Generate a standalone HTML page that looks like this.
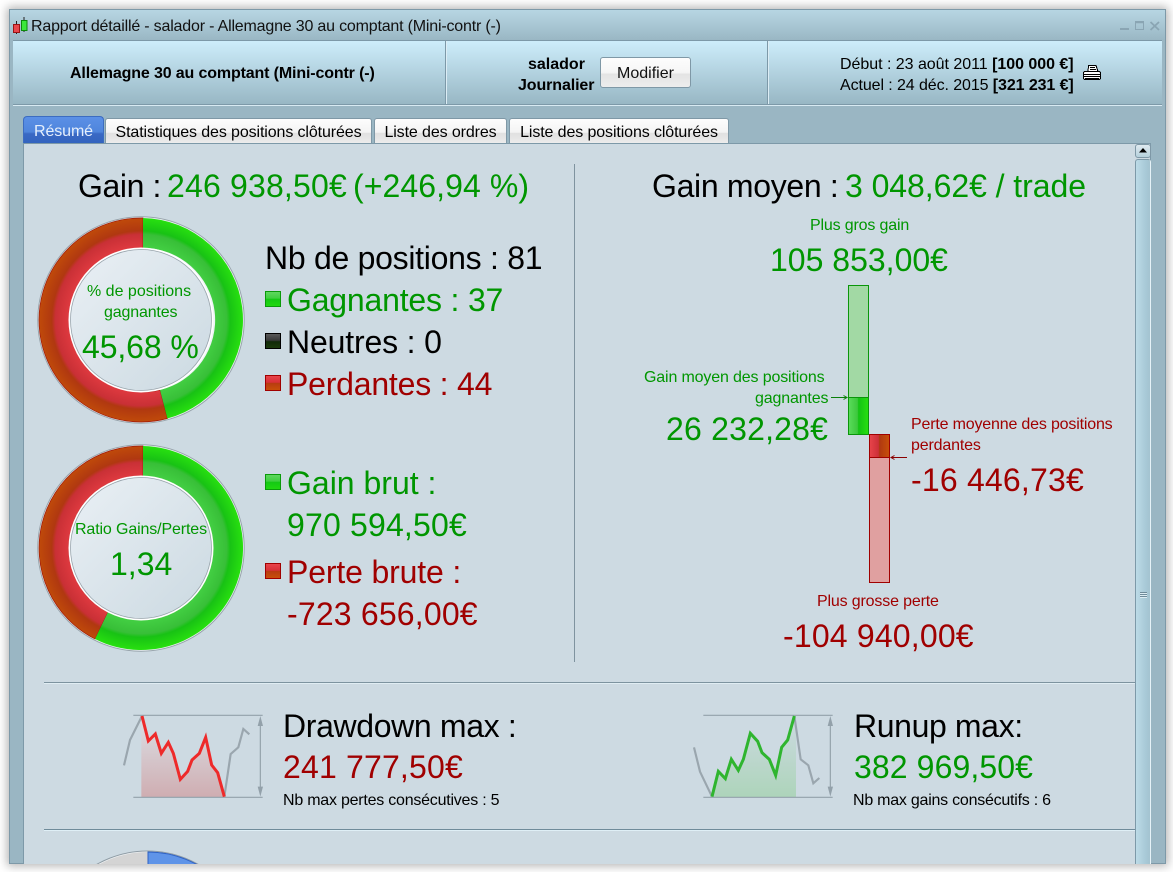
<!DOCTYPE html>
<html><head><meta charset="utf-8"><style>
html,body{margin:0;padding:0;background:#fff;width:1173px;height:872px;overflow:hidden}
*{box-sizing:border-box}
body{font-family:"Liberation Sans",Arial,sans-serif;position:relative}
.a{position:absolute}
.t{position:absolute;white-space:nowrap;line-height:1;color:#000}
.g{color:#009600}.d{color:#a00000}.b{font-weight:bold}
.s32{font-size:32px}
.s16{font-size:16px;letter-spacing:-.16px}
.tab{position:absolute;top:118px;height:25px;border:1px solid #7f98a6;border-bottom:0;border-radius:3px 3px 0 0;background:linear-gradient(#fdfdfd 0,#f4f4f4 55%,#e0e0e0 60%,#ececec 100%);font-size:16px;letter-spacing:-.11px;line-height:28px;text-align:center;color:#000;white-space:nowrap}
.sq{position:absolute;left:265px;width:16px;height:16px;border:1px solid}
.sq.gr{border-color:#0a9a0a;background:linear-gradient(#5fd75f 0,#3fcf3f 45%,#14c814 50%,#20d810 100%)}
.sq.rd{border-color:#a00000;background:linear-gradient(#e8444a 0,#d83038 45%,#b83c10 52%,#c8500a 100%)}
.sq.bk{border-color:#000;background:linear-gradient(#5a5a5a 0,#383838 45%,#102a08 55%,#1c3a0c 100%)}
</style></head><body>

<!-- window -->
<div class="a" style="left:9px;top:9px;width:1157px;height:855px;background:#9ab6c3;border:1px solid #7d99a8;box-shadow:0 0 9px 2px rgba(0,0,0,.3);overflow:hidden"></div>
<div class="a" style="left:10px;top:10px;width:1155px;height:30px;background:linear-gradient(#b7d6e3,#9ab7c4)"></div>

<!-- candle icon -->
<svg class="a" style="left:12px;top:16px" width="18" height="20"><path d="M4.500 5v13M12 1v15" stroke="#222" stroke-width="1" fill="none"/><rect x="1.500" y="8.500" width="6" height="8" fill="#e8474c" stroke="#9a1414"/><rect x="9.500" y="4.500" width="5.500" height="10" fill="#3ce83c" stroke="#0a8a0a"/></svg>
<div class="t" style="left:31px;top:19px;color:#111;font-size:16px;letter-spacing:-.19px">Rapport détaillé - salador - Allemagne 30 au comptant (Mini-contr (-)</div>

<!-- window controls -->
<svg class="a" style="left:1118px;top:18px" width="44" height="14"><path d="M2 11h9" stroke="#8aa5b3" stroke-width="2"/><rect x="17.500" y="3.500" width="8" height="8" fill="none" stroke="#8aa5b3" stroke-width="1"/><path d="M17.500 4.500h8" stroke="#8aa5b3" stroke-width="1.500"/><path d="M32.500 4l8.500 8M41 4l-8.500 8" stroke="#8aa5b3" stroke-width="1.800"/></svg>

<!-- header -->
<div class="a" style="left:13px;top:40px;width:1149px;height:65px;background:linear-gradient(#cdedfb,#98b7c4);border-top:1px solid #7d99a8;border-bottom:1px solid #7d99a8;box-shadow:0 1px 0 #d8eaf2"></div>
<div class="a" style="left:445px;top:41px;width:1px;height:63px;background:#7d99a8"></div>
<div class="a" style="left:446px;top:41px;width:1px;height:63px;background:#dcedf5"></div>
<div class="a" style="left:767px;top:41px;width:1px;height:63px;background:#7d99a8"></div>
<div class="a" style="left:768px;top:41px;width:1px;height:63px;background:#dcedf5"></div>
<div class="t b" style="left:70px;top:66px;font-size:16px;letter-spacing:-.14px">Allemagne 30 au comptant (Mini-contr (-)</div>
<div class="t b" style="left:528px;top:57px;font-size:16px">salador</div>
<div class="t b" style="left:518px;top:78px;font-size:16px;letter-spacing:-.1px">Journalier</div>
<div class="a" style="left:600px;top:57px;width:91px;height:31px;border:1px solid #7f98a6;border-radius:3px;background:linear-gradient(#fdfdfd 0,#f6f6f6 50%,#e4e4e4 56%,#ededed 100%);font-size:16px;line-height:31px;text-align:center;color:#111">Modifier</div>
<div class="t" style="left:840px;top:57px;font-size:16px;letter-spacing:-.03px">Début : 23 août 2011 <b>[100 000 €]</b></div>
<div class="t" style="left:840px;top:78px;font-size:16px;letter-spacing:-.09px">Actuel : 24 déc. 2015 <b>[321 231 €]</b></div>
<svg class="a" style="left:1082px;top:63px" width="20" height="19" shape-rendering="crispEdges"><path d="M6.500 2.500h7.500l2 6h-10z" fill="#fff" stroke="#000"/><path d="M8 4.500h5M8 6.500h6" stroke="#000" stroke-width="1"/><path d="M2.500 8.500h15l1 1v6l-1 1h-15l-1-1v-6z" fill="#fff" stroke="#000" stroke-width="1"/><path d="M2 11.500h16M2 13.500h16M3 15.500h14" stroke="#000" stroke-width="1"/></svg>

<!-- tabs -->
<div class="a" style="left:23px;top:116px;width:81px;height:28px;border:1px solid #3c6cc0;border-bottom:0;border-radius:4px 4px 0 0;background:linear-gradient(#5b90e6 0,#4f85dc 55%,#3a69c4 62%,#3263be 100%);font-size:16px;letter-spacing:-.11px;line-height:29px;text-align:center;color:#e4eefc">Résumé</div>
<div class="tab" style="left:105px;width:267px">Statistiques des positions clôturées</div>
<div class="tab" style="left:374px;width:133px">Liste des ordres</div>
<div class="tab" style="left:509px;width:220px">Liste des positions clôturées</div>

<!-- content -->
<div class="a" style="left:23px;top:143px;width:1128px;height:721px;background:#cddae2;border-left:1px solid #7d99a8;border-top:1px solid #7d99a8;border-right:1px solid #7d99a8"></div>
<!-- scrollbar -->
<div class="a" style="left:1135px;top:144px;width:16px;height:14px;border:1px solid #7f98a6;border-radius:3px;background:linear-gradient(#dfeaf0,#b5d0dc)"></div>
<svg class="a" style="left:1138px;top:147px" width="10" height="7"><path d="M1 5.500h8L5 1z" fill="#000"/></svg>
<div class="a" style="left:1135px;top:159px;width:16px;height:705px;border:1px solid #7d99a8;border-bottom:0;border-radius:3px 3px 0 0;border-right-color:#e6f2f7;background:linear-gradient(90deg,#bcdbe7,#a8c9d7 70%,#a3c3d0)"></div>
<div class="a" style="left:1140px;top:592px;width:7px;height:1px;background:#6f8b9a;box-shadow:0 1px 0 #dcecf3,0 2px 0 #6f8b9a,0 3px 0 #dcecf3,0 4px 0 #6f8b9a,0 5px 0 #dcecf3"></div>

<!-- headlines -->
<div class="a" style="left:574px;top:164px;width:1px;height:498px;background:#7f939f"></div>
<div class="t s32" style="left:78px;top:170px;letter-spacing:-.4px">Gain :</div>
<div class="t s32 g" style="left:167px;top:170px;letter-spacing:.18px">246 938,50€</div>
<div class="t s32 g" style="left:353px;top:170px;letter-spacing:.08px">(+246,94 %)</div>
<div class="t s32" style="left:652px;top:170px;letter-spacing:-.32px">Gain moyen :</div>
<div class="t s32 g" style="left:845px;top:170px;letter-spacing:-.06px">3 048,62€ / trade</div>

<!-- donuts -->
<svg class="a" style="left:30px;top:210px" width="222" height="450" viewBox="30 210 222 450">
<defs>
<radialGradient id="gg1" gradientUnits="userSpaceOnUse" cx="141" cy="320" r="102"><stop offset=".7" stop-color="#44d044"/><stop offset=".84" stop-color="#38bf38"/><stop offset=".875" stop-color="#18c214"/><stop offset="1" stop-color="#28e010"/></radialGradient>
<radialGradient id="rg1" gradientUnits="userSpaceOnUse" cx="141" cy="320" r="102"><stop offset=".7" stop-color="#e03a40"/><stop offset=".84" stop-color="#c93036"/><stop offset=".875" stop-color="#b03810"/><stop offset="1" stop-color="#c04a0a"/></radialGradient>
<radialGradient id="gg2" gradientUnits="userSpaceOnUse" cx="141" cy="548" r="102"><stop offset=".7" stop-color="#44d044"/><stop offset=".84" stop-color="#38bf38"/><stop offset=".875" stop-color="#18c214"/><stop offset="1" stop-color="#28e010"/></radialGradient>
<radialGradient id="rg2" gradientUnits="userSpaceOnUse" cx="141" cy="548" r="102"><stop offset=".7" stop-color="#e03a40"/><stop offset=".84" stop-color="#c93036"/><stop offset=".875" stop-color="#b03810"/><stop offset="1" stop-color="#c04a0a"/></radialGradient>
<linearGradient id="cen" x1="0" y1="0" x2="1" y2="1"><stop offset="0" stop-color="#eaf0f5"/><stop offset="1" stop-color="#cbd9e1"/></linearGradient>
</defs>
<!-- donut 1 -->
<circle cx="141" cy="320" r="103.200" fill="#eef3f6" stroke="#98a4ac" stroke-width="1"/>
<path d="M143 218 A102 102 0 1 0 167.400 418.500 L160 390 A72 72 0 1 1 143 248 Z" fill="url(#rg1)" stroke="#a01808" stroke-width=".7"/>
<path d="M143 218 A102 102 0 0 1 167.400 418.500 L160 390 A72 72 0 0 0 143 248 Z" fill="url(#gg1)"/>
<circle cx="141" cy="320" r="71.500" fill="url(#cen)" stroke="#fff" stroke-width="2"/>
<circle cx="141" cy="320" r="70.500" fill="none" stroke="#98a4ac" stroke-width=".8"/>
<!-- donut 2 -->
<circle cx="141" cy="548" r="103.200" fill="#eef3f6" stroke="#98a4ac" stroke-width="1"/>
<path d="M143 446 A102 102 0 0 0 95 639 L108 612 A72 72 0 0 1 143 476 Z" fill="url(#rg2)" stroke="#a01808" stroke-width=".7"/>
<path d="M143 446 A102 102 0 1 1 95 639 L108 612 A72 72 0 1 0 143 476 Z" fill="url(#gg2)"/>
<circle cx="141" cy="548" r="71.500" fill="url(#cen)" stroke="#fff" stroke-width="2"/>
<circle cx="141" cy="548" r="70.500" fill="none" stroke="#98a4ac" stroke-width=".8"/>
</svg>
<div class="t s16 g" style="left:87px;top:284px;letter-spacing:0">% de positions</div>
<div class="t s16 g" style="left:104px;top:305px">gagnantes</div>
<div class="t s32 g" style="left:82px;top:331px;letter-spacing:-.1px">45,68 %</div>
<div class="t s16 g" style="left:75px;top:522px;letter-spacing:-.13px">Ratio Gains/Pertes</div>
<div class="t s32 g" style="left:110px;top:548px">1,34</div>

<!-- left list -->
<div class="t s32" style="left:265px;top:242px;letter-spacing:-.28px">Nb de positions : 81</div>
<div class="sq gr" style="top:291px"></div>
<div class="t s32 g" style="left:287px;top:284px;letter-spacing:-.19px">Gagnantes : 37</div>
<div class="sq bk" style="top:333px"></div>
<div class="t s32" style="left:287px;top:326px;letter-spacing:-.16px">Neutres : 0</div>
<div class="sq rd" style="top:375px"></div>
<div class="t s32 d" style="left:287px;top:368px;letter-spacing:-.21px">Perdantes : 44</div>
<div class="sq gr" style="top:474px"></div>
<div class="t s32 g" style="left:287px;top:467px">Gain brut :</div>
<div class="t s32 g" style="left:287px;top:509px;letter-spacing:.18px">970 594,50€</div>
<div class="sq rd" style="top:563px"></div>
<div class="t s32 d" style="left:287px;top:556px;letter-spacing:-.15px">Perte brute :</div>
<div class="t s32 d" style="left:287px;top:598px;letter-spacing:.18px">-723 656,00€</div>

<!-- right bars -->
<div class="t s16 g" style="left:810px;top:218px">Plus gros gain</div>
<div class="t s32 g" style="left:770px;top:244px">105 853,00€</div>
<svg class="a" style="left:830px;top:280px" width="90" height="310" viewBox="830 280 90 310">
<defs>
<linearGradient id="bg" x1="0" x2="1" y1="0" y2="0"><stop offset="0" stop-color="#5bdc5b"/><stop offset=".45" stop-color="#3cc83c"/><stop offset=".5" stop-color="#14c214"/><stop offset="1" stop-color="#28e010"/></linearGradient>
<linearGradient id="br" x1="0" x2="1" y1="0" y2="0"><stop offset="0" stop-color="#e8444a"/><stop offset=".45" stop-color="#cc3038"/><stop offset=".5" stop-color="#b03810"/><stop offset="1" stop-color="#c8500a"/></linearGradient>
</defs>
<rect x="848.500" y="285.500" width="20" height="112" fill="#a2d9a4" stroke="#0a960a"/>
<rect x="848.500" y="397.500" width="20" height="37" fill="url(#bg)" stroke="#0a960a"/>
<rect x="869.500" y="434.500" width="20" height="23" fill="url(#br)" stroke="#a00000"/>
<rect x="869.500" y="457.500" width="20" height="125" fill="#e0a0a0" stroke="#a00000"/>
<path d="M831 397.500h16M843.500 395.500l3.500 2-3.500 2" stroke="#0a800a" fill="none"/>
<path d="M907 457.500h-16M894.500 455.500l-3.500 2 3.500 2" stroke="#8a0000" fill="none"/>
</svg>
<div class="t s16 g" style="left:644px;top:370px;letter-spacing:-.15px">Gain moyen des positions</div>
<div class="t s16 g" style="left:755px;top:391px">gagnantes</div>
<div class="t s32 g" style="left:666px;top:413px;letter-spacing:.2px">26 232,28€</div>
<div class="t s16 d" style="left:911px;top:417px;letter-spacing:-.18px">Perte moyenne des positions</div>
<div class="t s16 d" style="left:911px;top:438px">perdantes</div>
<div class="t s32 d" style="left:911px;top:464px;letter-spacing:.2px">-16 446,73€</div>
<div class="t s16 d" style="left:817px;top:594px">Plus grosse perte</div>
<div class="t s32 d" style="left:783px;top:620px;letter-spacing:.18px">-104 940,00€</div>

<!-- separators -->
<div class="a" style="left:44px;top:682px;width:1091px;height:1px;background:#7d939f;box-shadow:0 1px 0 #e0edf3"></div>
<div class="a" style="left:44px;top:829px;width:1091px;height:1px;background:#6f8b9a;box-shadow:0 1px 0 #dfeff6"></div>

<!-- drawdown chart -->
<svg class="a" style="left:110px;top:700px" width="170" height="110" viewBox="0 0 510 330">
<defs>
<linearGradient id="ddf" x1="0" x2="0" y1="0" y2="1"><stop offset="0" stop-color="#dbe1e7"/><stop offset="1" stop-color="#cfadb1"/></linearGradient>
<linearGradient id="ruf" x1="0" x2="0" y1="0" y2="1"><stop offset="0" stop-color="#cddae2"/><stop offset="1" stop-color="#add4ba"/></linearGradient>
</defs>
<path d="M94 48L115 123L136 102L154 160L175 127L190 160L211 238L233 214L246 180L268 160L287 112L305 195L323 218L343 292H94Z" fill="url(#ddf)"/>
<path d="M70 46H458M70 292H458M451 60V280" stroke="#93a1aa" stroke-width="3.500" fill="none"/>
<path d="M451 48l-8 30h16zM451 290l-8-30h16z" fill="#93a1aa"/>
<path d="M42 196L60 120L96 48M343 290L362 162L385 142L400 87L418 103" stroke="#9aa6ae" stroke-width="6.500" fill="none"/>
<path d="M96 48L115 123L136 102L154 160L175 127L190 160L211 238L233 214L246 180L268 160L287 112L305 195L323 218L343 290" stroke="#ee2a2a" stroke-width="9" fill="none"/>
</svg>
<!-- runup chart -->
<svg class="a" style="left:680px;top:700px" width="170" height="110" viewBox="0 0 510 330">
<path d="M96 292L115 214L136 236L154 178L175 211L190 178L211 100L233 124L246 158L268 178L287 226L305 142L323 120L343 48L348 48V292Z" fill="url(#ruf)"/>
<path d="M70 46H458M70 292H458M451 60V280" stroke="#93a1aa" stroke-width="3.500" fill="none"/>
<path d="M451 48l-8 30h16zM451 290l-8-30h16z" fill="#93a1aa"/>
<path d="M42 142L60 215L96 290M343 48L362 178L385 196L400 250L418 234" stroke="#9aa6ae" stroke-width="6.500" fill="none"/>
<path d="M96 290L115 214L136 236L154 178L175 211L190 178L211 100L233 124L246 158L268 178L287 226L305 142L323 120L343 48" stroke="#2fb52f" stroke-width="9" fill="none"/>
</svg>
<div class="t s32" style="left:283px;top:710px;letter-spacing:-.35px">Drawdown max :</div>
<div class="t s32 d" style="left:283px;top:751px;letter-spacing:.18px">241 777,50€</div>
<div class="t s16" style="left:283px;top:793px;letter-spacing:-.23px">Nb max pertes consécutives : 5</div>
<div class="t s32" style="left:854px;top:710px;letter-spacing:-.38px">Runup max:</div>
<div class="t s32 g" style="left:854px;top:751px;letter-spacing:.1px">382 969,50€</div>
<div class="t s16" style="left:853px;top:793px;letter-spacing:-.24px">Nb max gains consécutifs : 6</div>

<!-- partial donut bottom -->
<svg class="a" style="left:90px;top:848px" width="116" height="16" viewBox="90 848 116 16">
<circle cx="147.500" cy="954" r="103" fill="#f0f4f6" stroke="#8f9ca5" stroke-width="1"/>
<path d="M148 852 A102 102 0 0 0 148 1056 Z" fill="#d4d4d4"/>
<path d="M148 852 A102 102 0 0 1 148 1056 Z" fill="#5f94e8" stroke="#2f62c4" stroke-width="1"/>
</svg>

</body></html>
